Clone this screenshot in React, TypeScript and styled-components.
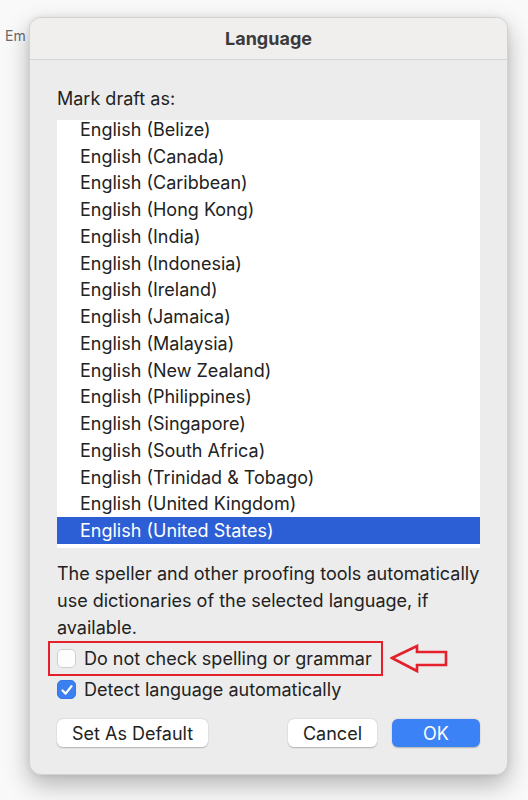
import styled, { createGlobalStyle } from "styled-components"

const GlobalStyle = createGlobalStyle`
    html, body {
        margin: 0;
        padding: 0;
        background: #f9f9f9;
    }
    body {
        font-family: Inter, "Liberation Sans", Arial, sans-serif;
        color: #222;
    }
`

const languages = [
    "English (Belize)",
    "English (Canada)",
    "English (Caribbean)",
    "English (Hong Kong)",
    "English (India)",
    "English (Indonesia)",
    "English (Ireland)",
    "English (Jamaica)",
    "English (Malaysia)",
    "English (New Zealand)",
    "English (Philippines)",
    "English (Singapore)",
    "English (South Africa)",
    "English (Trinidad & Tobago)",
    "English (United Kingdom)",
    "English (United States)",
]

export default function App() {
    return (
        <>
            <GlobalStyle />
            <Page>
                <BehindText>Em</BehindText>
                <Dialog>
                    <TitleBar>Language</TitleBar>
                    <DialogBody>
                        <Label>Mark draft as:</Label>
                        <ListBox>
                            <ListInner>
                                {languages.map((item) => (
                                    <ListRow key={item} selected={item === "English (United States)"}>
                                        {item}
                                    </ListRow>
                                ))}
                            </ListInner>
                        </ListBox>
                        <Description>
                            The speller and other proofing tools automatically use dictionaries of the selected language, if available.
                        </Description>
                        <OptionRow>
                            <Highlight>
                                <CheckBox checked={false} />
                                <OptionText>Do not check spelling or grammar</OptionText>
                            </Highlight>
                            <Arrow width="58" height="30" viewBox="0 0 58 30">
                                <path d="M2 14 L27 2 L27 8 L56 8 L56 21 L27 21 L27 27 Z" fill="none" stroke="#e3202b" strokeWidth="2.6" strokeLinejoin="miter" />
                            </Arrow>
                        </OptionRow>
                        <CheckRow>
                            <CheckBox checked>
                                <svg width="14" height="14" viewBox="0 0 14 14">
                                    <path d="M2.5 7.5 L5.6 10.6 L11.5 3.2" fill="none" stroke="#fff" strokeWidth="2.2" strokeLinecap="round" strokeLinejoin="round" />
                                </svg>
                            </CheckBox>
                            <OptionText>Detect language automatically</OptionText>
                        </CheckRow>
                        <ButtonRow>
                            <Button>Set As Default</Button>
                            <Spacer />
                            <Button wide>Cancel</Button>
                            <Button wide primary>OK</Button>
                        </ButtonRow>
                    </DialogBody>
                </Dialog>
            </Page>
        </>
    )
}

const Page = styled.div`
    position: relative;
    width: 528px;
    height: 800px;
    padding: 17px 0 0 29px;
    box-sizing: border-box;
    overflow: hidden;
`
const BehindText = styled.span`
    position: absolute;
    left: 5px;
    top: 27px;
    font-size: 14px;
    color: #6a6a6a;
`
const Dialog = styled.div`
    position: relative;
    width: 479px;
    height: 758px;
    box-sizing: border-box;
    background: #ececec;
    border: 1px solid #d2d2d2;
    border-radius: 12px;
    box-shadow: 0 10px 24px rgba(0, 0, 0, 0.28), 0 0 6px rgba(0, 0, 0, 0.08);
    overflow: hidden;
`
const TitleBar = styled.div`
    height: 41px;
    display: flex;
    align-items: center;
    justify-content: center;
    background: #f0efee;
    border-bottom: 1px solid #d4d4d4;
    font-size: 18px;
    font-weight: 700;
    color: #3b3b3b;
`
const DialogBody = styled.div`
    display: flex;
    flex-direction: column;
    padding: 0 27px 0 27px;
`
const Label = styled.div`
    margin-top: 28px;
    height: 22px;
    font-size: 18px;
    color: #222;
`
const ListBox = styled.div`
    margin-top: 10px;
    height: 428px;
    background: #fff;
    overflow: hidden;
`
const ListInner = styled.div`
    margin-top: -4px;
`
const ListRow = styled.div<{ selected?: boolean }>`
    height: 26.75px;
    display: flex;
    align-items: center;
    padding-left: 23px;
    font-size: 18px;
    color: ${(p) => (p.selected ? "#fff" : "#222")};
    background: ${(p) => (p.selected ? "#2c5fd6" : "transparent")};
`
const Description = styled.p`
    margin: 12px 0 0 0;
    font-size: 18px;
    line-height: 27px;
    color: #222;
`
const OptionRow = styled.div`
    display: flex;
    align-items: center;
    margin-top: 0;
    margin-left: -9px;
`
const Highlight = styled.div`
    display: flex;
    align-items: center;
    gap: 8px;
    width: 335px;
    height: 35px;
    box-sizing: border-box;
    padding-left: 7px;
    border: 2.5px solid #e3202b;
`
const Arrow = styled.svg`
    margin-left: 7px;
`
const CheckRow = styled.div`
    display: flex;
    align-items: center;
    gap: 8px;
    margin-top: 3px;
`
const CheckBox = styled.div<{ checked?: boolean }>`
    width: 19px;
    height: 19px;
    box-sizing: border-box;
    border-radius: 5px;
    display: flex;
    align-items: center;
    justify-content: center;
    background: ${(p) => (p.checked ? "#3b7ff0" : "#fdfdfd")};
    border: 1px solid ${(p) => (p.checked ? "#3577e6" : "#cfcfcf")};
`
const OptionText = styled.span`
    font-size: 18px;
    color: #222;
`
const ButtonRow = styled.div`
    display: flex;
    align-items: center;
    gap: 15px;
    margin-top: 19px;
`
const Spacer = styled.div`
    flex: 1;
`
const Button = styled.div<{ primary?: boolean; wide?: boolean }>`
    height: 28px;
    display: flex;
    align-items: center;
    justify-content: center;
    padding: 0 15px;
    min-width: ${(p) => (p.wide ? "88px" : "auto")};
    box-sizing: border-box;
    border-radius: 6px;
    font-size: 18px;
    color: ${(p) => (p.primary ? "#fff" : "#222")};
    background: ${(p) => (p.primary ? "#3a82f6" : "#fff")};
    box-shadow: 0 0.5px 1.5px rgba(0, 0, 0, 0.25);
`
